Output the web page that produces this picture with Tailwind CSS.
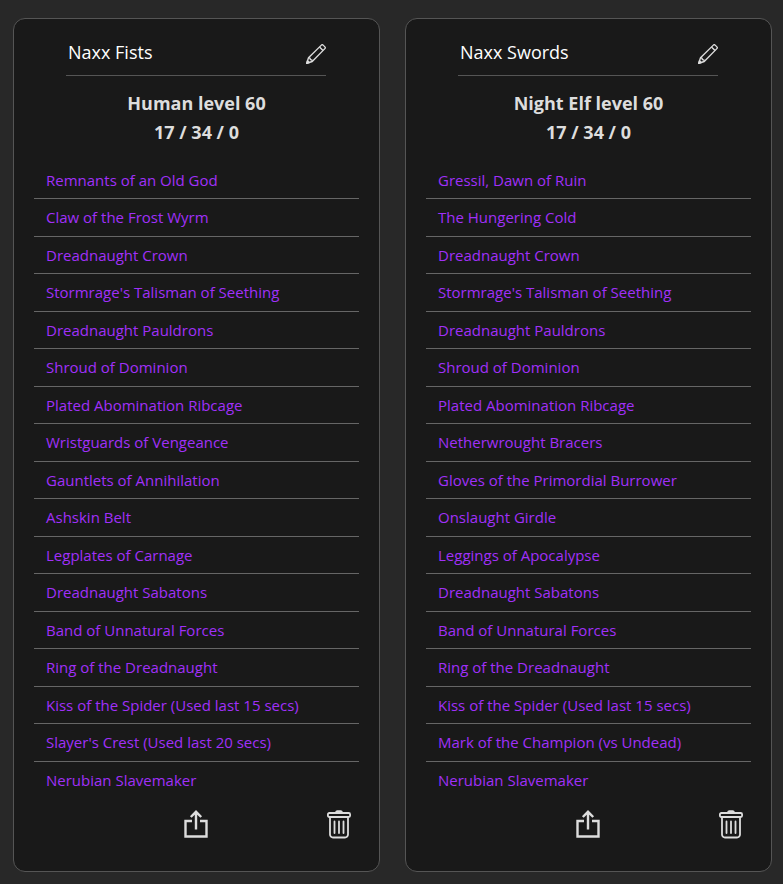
<!DOCTYPE html>
<html lang="en">
<head>
  <meta charset="UTF-8">
  <meta name="viewport" content="width=device-width, initial-scale=1.0">
  <title>Gear sets</title>
  <script src="https://cdn.jsdelivr.net/npm/@tailwindcss/browser@4"></script>
</head>
<body class="bg-[#282828] font-['Open_Sans','Noto_Sans',sans-serif]">
  <main id="sets" class="grid grid-cols-2 gap-[25px] pt-[18px] pr-[11px] pb-3 pl-[13px]"></main>

  <!-- one card per saved set -->
  <template id="cardTemplate">
    <section class="rounded-xl border border-[#555] bg-[#191919] px-5 pb-[31px]">
      <div class="mr-[33px] ml-8 flex h-[57px] items-center border-b border-[#555] pt-[14px]">
        <input type="text" aria-label="Set name" class="set-name min-w-0 flex-1 bg-transparent px-[2px] pb-1 text-lg text-white outline-none">
        <button type="button" aria-label="Rename set" class="cursor-pointer text-[#ddd]">
          <svg class="size-5" viewBox="0 0 16 16" fill="none" stroke="currentColor" stroke-width="1.1" stroke-linejoin="round">
            <path d="M.6 15.4 2 11 12.3.9a1 1 0 0 1 1.4 0l1.4 1.4a1 1 0 0 1 0 1.4L5 14Z"/>
            <path d="m10.8 2.4 2.8 2.8M2 11l1.2.3.3 1.2 1.2.2L5 14"/>
            <path d="m.6 15.4.6-2 1.4 1.4Z" fill="currentColor"/>
          </svg>
        </button>
      </div>

      <h2 class="mt-[13px] text-center text-lg leading-relaxed font-bold text-[#ddd]">
        <span class="set-race block"></span>
        <span class="set-talents block"></span>
      </h2>

      <ul class="set-items mt-[14px] text-[15px] leading-normal"></ul>

      <div class="mt-[10px] grid grid-cols-3 items-center px-[6px] text-[#ddd]">
        <button type="button" aria-label="Share set" class="col-start-2 cursor-pointer justify-self-center">
          <svg class="size-8" viewBox="0 0 32 32" fill="none" stroke="currentColor" stroke-width="2.4">
            <path d="M12 13H5.5v15.500h21V13H20"/>
            <path d="M16 21.500V4.500M10.800 9 16 3.800 21.200 9"/>
          </svg>
        </button>
        <button type="button" aria-label="Delete set" class="cursor-pointer justify-self-end">
          <svg class="h-8 w-7" viewBox="0 0 28 32" fill="none" stroke="currentColor" stroke-width="1.8" stroke-linecap="round" stroke-linejoin="round">
            <rect x="2.900" y="5" width="22.200" height="4" rx="1.400"/>
            <path d="M11 4.200q.3-1 1.200-1h3.600q.9 0 1.200 1Z" fill="currentColor"/>
            <path d="M5 9.500v17a3 3 0 0 0 3 3h12a3 3 0 0 0 3-3v-17M9.500 13.500v11.500M14 13.500v11.500M18.500 13.500v11.500"/>
          </svg>
        </button>
      </div>
    </section>
  </template>

  <script>
    const sets = [
      {
        name: "Naxx Fists",
        race: "Human level 60",
        talents: "17 / 34 / 0",
        items: [
          "Remnants of an Old God",
          "Claw of the Frost Wyrm",
          "Dreadnaught Crown",
          "Stormrage's Talisman of Seething",
          "Dreadnaught Pauldrons",
          "Shroud of Dominion",
          "Plated Abomination Ribcage",
          "Wristguards of Vengeance",
          "Gauntlets of Annihilation",
          "Ashskin Belt",
          "Legplates of Carnage",
          "Dreadnaught Sabatons",
          "Band of Unnatural Forces",
          "Ring of the Dreadnaught",
          "Kiss of the Spider (Used last 15 secs)",
          "Slayer's Crest (Used last 20 secs)",
          "Nerubian Slavemaker"
        ]
      },
      {
        name: "Naxx Swords",
        race: "Night Elf level 60",
        talents: "17 / 34 / 0",
        items: [
          "Gressil, Dawn of Ruin",
          "The Hungering Cold",
          "Dreadnaught Crown",
          "Stormrage's Talisman of Seething",
          "Dreadnaught Pauldrons",
          "Shroud of Dominion",
          "Plated Abomination Ribcage",
          "Netherwrought Bracers",
          "Gloves of the Primordial Burrower",
          "Onslaught Girdle",
          "Leggings of Apocalypse",
          "Dreadnaught Sabatons",
          "Band of Unnatural Forces",
          "Ring of the Dreadnaught",
          "Kiss of the Spider (Used last 15 secs)",
          "Mark of the Champion (vs Undead)",
          "Nerubian Slavemaker"
        ]
      }
    ];

    const template = document.getElementById("cardTemplate");
    sets.forEach(set => {
      const card = template.content.cloneNode(true);
      card.querySelector(".set-name").value = set.name;
      card.querySelector(".set-race").textContent = set.race;
      card.querySelector(".set-talents").textContent = set.talents;
      card.querySelector(".set-items").innerHTML = set.items.map(item =>
        `<li class="border-b border-[#666] px-3 py-[7px] last:border-b-0"><a href="#" class="text-[#a030f8]">${item}</a></li>`
      ).join("");
      document.getElementById("sets").appendChild(card);
    });
  </script>
</body>
</html>
